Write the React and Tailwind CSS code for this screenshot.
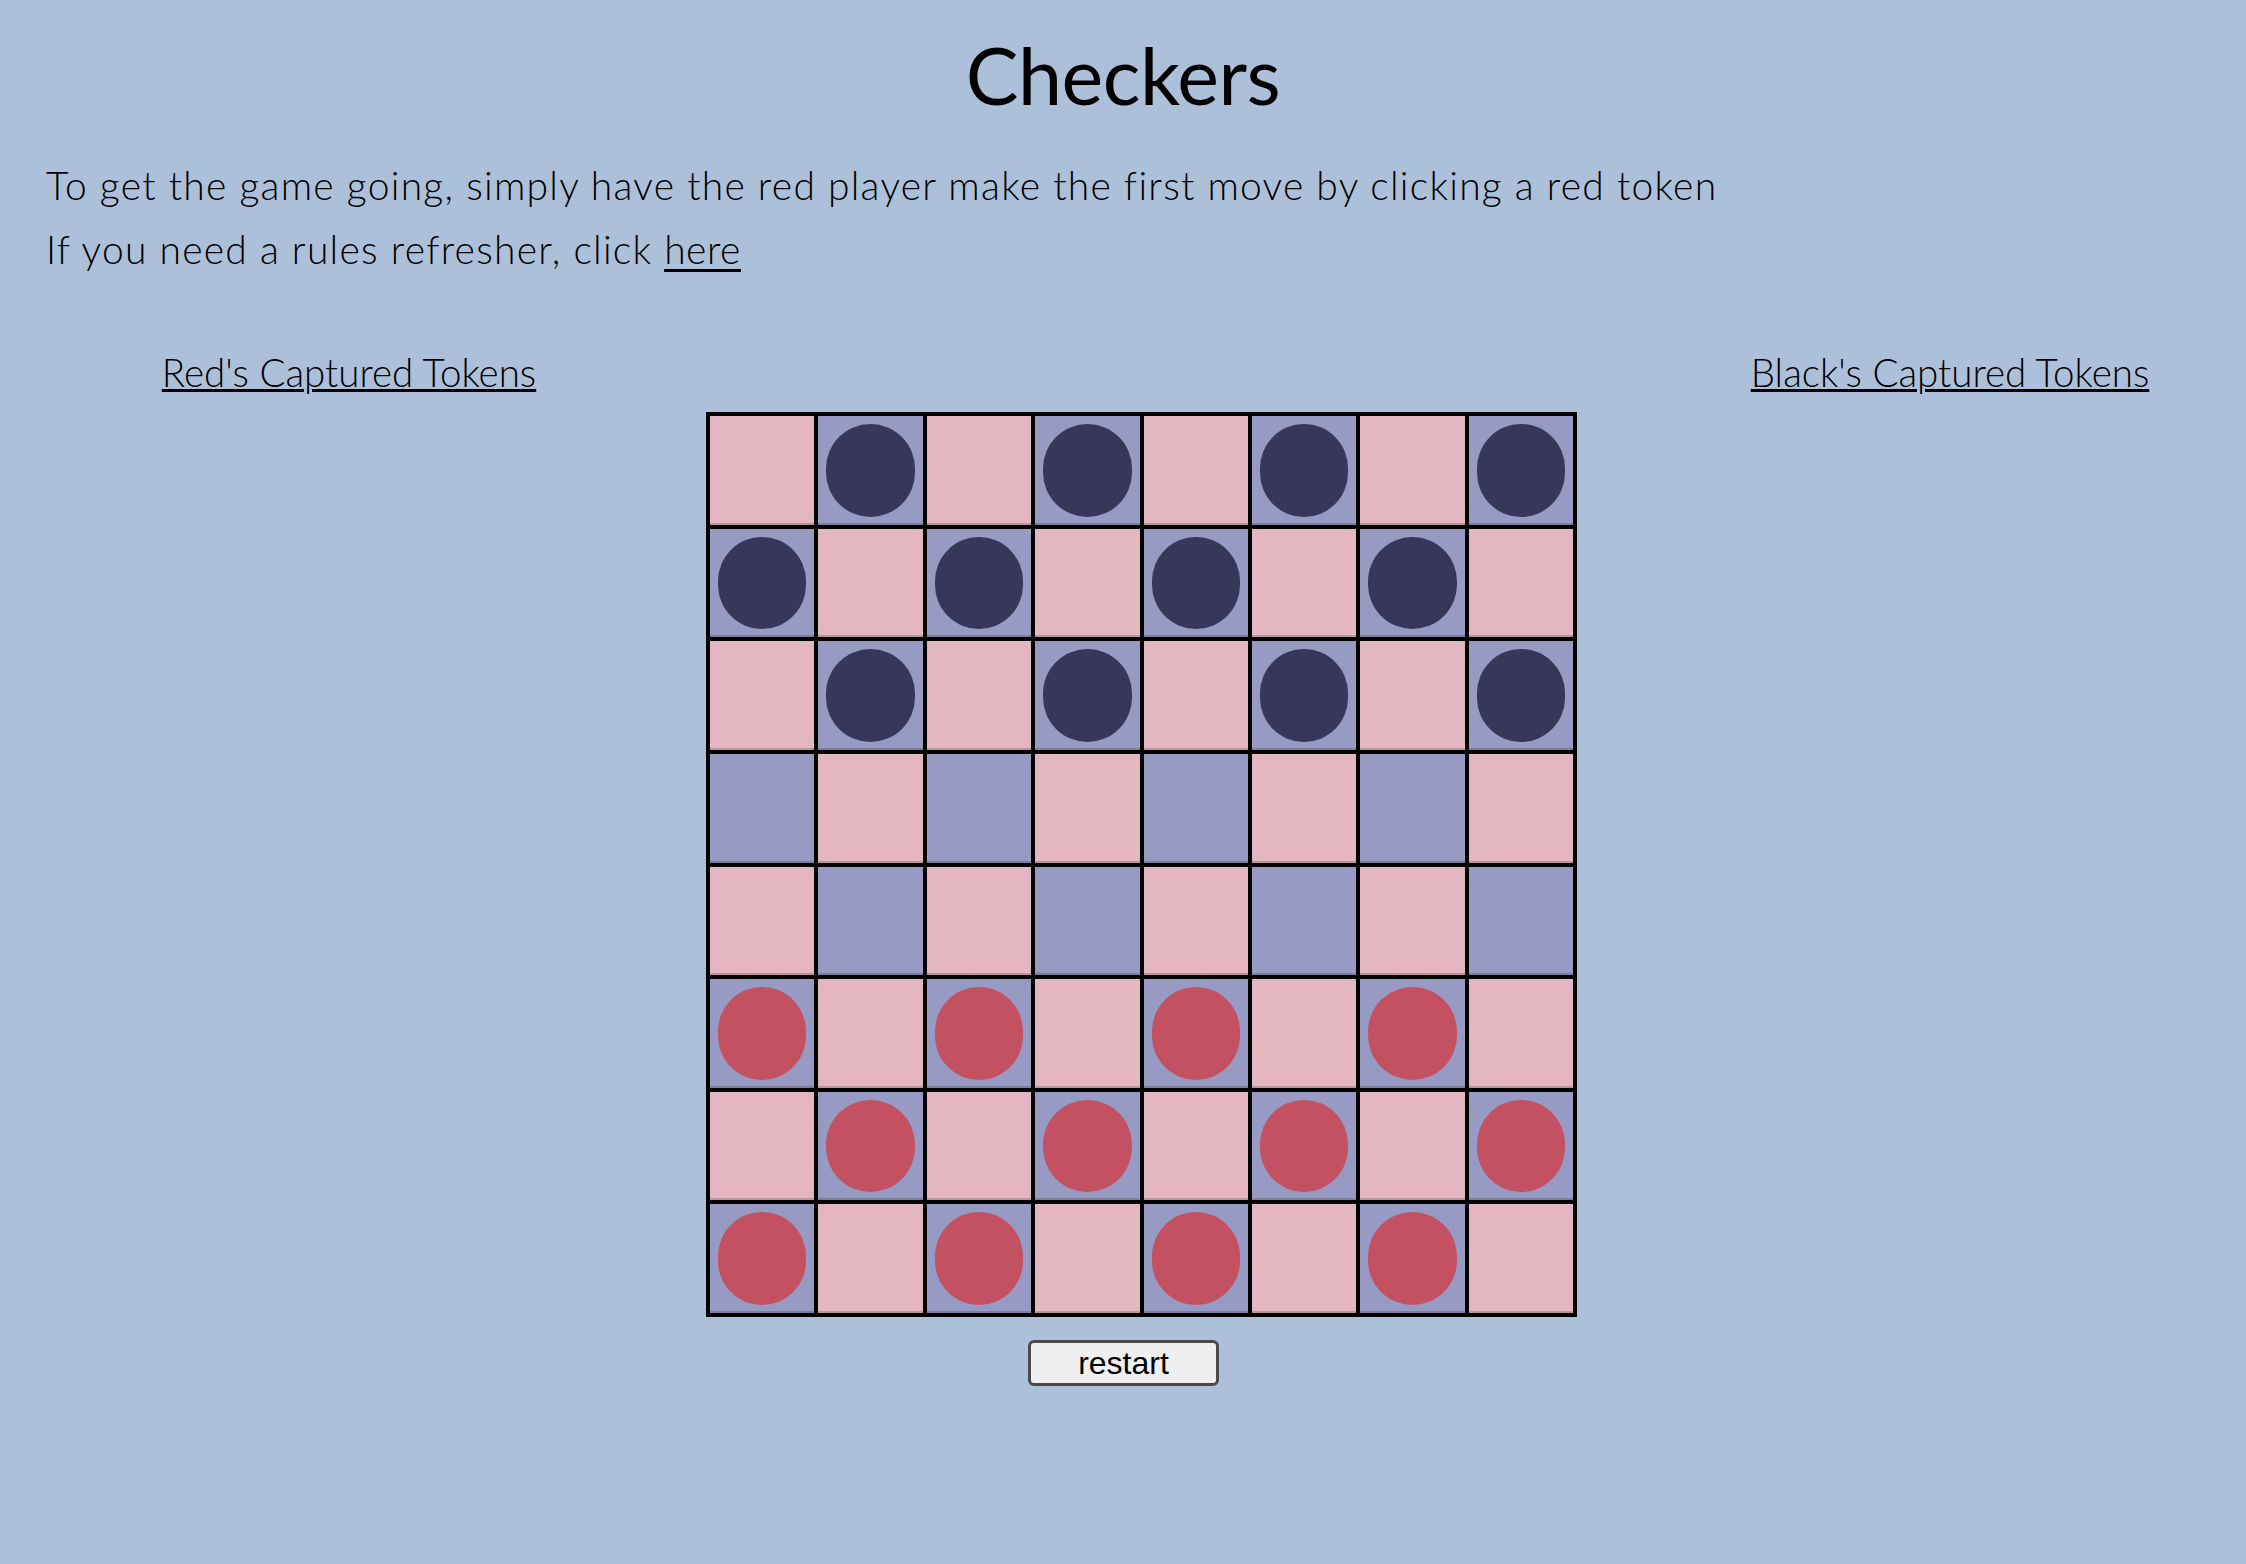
import React, { useState } from 'react';

const initialBoard = () => {
  const rows = [];
  for (let r = 0; r < 8; r++) {
    const row = [];
    for (let c = 0; c < 8; c++) {
      const dark = (r + c) % 2 === 1;
      let piece = null;
      if (dark && r < 3) piece = 'black';
      if (dark && r > 4) piece = 'red';
      row.push({ dark, piece });
    }
    rows.push(row);
  }
  return rows;
};

const Cell = ({ cell }) => (
  <div
    className={`border-2 border-black p-2 shadow-[inset_0_-2px_0_rgba(0,0,0,0.18)] ${
      cell.dark ? 'bg-[#979bc3]' : 'bg-[#e3b6c1]'
    }`}
  >
    {cell.piece && (
      <div
        className={`w-full h-full rounded-full ${
          cell.piece === 'black' ? 'bg-[#37375b]' : 'bg-[#c45162]'
        }`}
      />
    )}
  </div>
);

const App = () => {
  const [board, setBoard] = useState(initialBoard);

  return (
    <div className="min-h-screen bg-[#adc0d9] text-black font-['Lato','Noto_Sans',sans-serif]">
      <h1 className="pt-[25px] text-center text-[79px] leading-[100px] tracking-[-0.5px] font-normal">Checkers</h1>

      <div className="mt-[28px] pl-[46px] text-[39px] leading-[64px] tracking-[1.25px] font-light">
        <p>To get the game going, simply have the red player make the first move by clicking a red token</p>
        <p>
          If you need a rules refresher, click{' '}
          <a href="#" className="underline decoration-[3px] underline-offset-[5px] tracking-[0.5px]">here</a>
        </p>
      </div>

      <div className="mt-[67px] flex items-start">
        <div className="w-[698px] shrink-0 text-center">
          <h2 className="text-[38.5px] leading-[48px] font-light underline decoration-[3px] underline-offset-[2px]">
            Red's Captured Tokens
          </h2>
        </div>

        <div className="ml-[8px] mt-[64px] shrink-0 flex flex-col items-center">
          <div className="grid grid-cols-8 grid-rows-8 w-[871px] h-[905px] border-2 border-black">
            {board.map((row, r) =>
              row.map((cell, c) => <Cell key={`${r}-${c}`} cell={cell} />)
            )}
          </div>
          <button
            onClick={() => setBoard(initialBoard())}
            className="mt-[23px] -ml-[36px] w-[191px] h-[46px] rounded-md border-[3px] border-[#4a4a4a] bg-[#efefef] text-[32px] leading-none font-['Liberation_Sans',Arial,sans-serif]"
          >
            restart
          </button>
        </div>

        <div className="ml-[93px] w-[560px] shrink-0 text-center">
          <h2 className="text-[38.5px] leading-[48px] font-light underline decoration-[3px] underline-offset-[2px]">
            Black's Captured Tokens
          </h2>
        </div>
      </div>
    </div>
  );
};

export default App;
